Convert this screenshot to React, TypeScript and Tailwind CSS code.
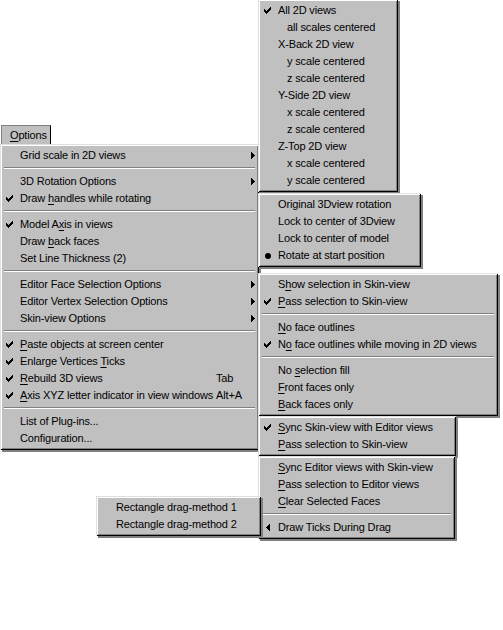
import React from 'react';

type Mark = 'check' | 'dot' | 'left';
type Item =
  | { t: string; u?: number; mark?: Mark; sub?: boolean; key?: string; ind?: boolean }
  | 'sep';

// classic 7x7 menu check bitmap
const CHECK = ['......#', '.....##', '#...###', '##.###.', '#####..', '.###...', '..#....'];

const Check = () => (
  <svg width="7" height="7" viewBox="0 0 7 7" shapeRendering="crispEdges">
    {CHECK.flatMap((row, y) =>
      row.split('').map((c, x) => (c === '#' ? <rect key={`${x}-${y}`} x={x} y={y} width="1" height="1" fill="#000" /> : null))
    )}
  </svg>
);

const ArrowRight = () => (
  <svg width="4" height="7" viewBox="0 0 4 7" shapeRendering="crispEdges">
    {[1, 2, 3, 4, 3, 2, 1].map((w, y) => (
      <rect key={y} x={0} y={y} width={w} height="1" fill="#000" />
    ))}
  </svg>
);

const ArrowLeft = () => (
  <svg width="4" height="7" viewBox="0 0 4 7" shapeRendering="crispEdges">
    {[1, 2, 3, 4, 3, 2, 1].map((w, y) => (
      <rect key={y} x={4 - w} y={y} width={w} height="1" fill="#000" />
    ))}
  </svg>
);

const Label = ({ t, u }: { t: string; u?: number }) =>
  u === undefined ? (
    <>{t}</>
  ) : (
    <>
      {t.slice(0, u)}
      <span className="underline decoration-1 underline-offset-[2px]">{t[u]}</span>
      {t.slice(u + 1)}
    </>
  );

const Menu = ({ items, className, keys }: { items: Item[]; className: string; keys?: boolean }) => (
  <div
    className={`absolute bg-[#c0c0c0] p-[3px] shadow-[inset_1px_1px_0_#dfdfdf,inset_-1px_-1px_0_#000,inset_2px_2px_0_#fff,inset_-2px_-2px_0_#808080,2px_2px_0_#808080] ${className}`}
  >
    {items.map((it, i) =>
      it === 'sep' ? (
        <div key={i} className="h-[9px] py-[3px] px-px">
          <div className="border-t border-b border-t-[#808080] border-b-white" />
        </div>
      ) : (
        <div key={i} className="flex h-[17px] items-center whitespace-nowrap">
          <div className="flex w-[17px] items-center pl-[3px]">
            {it.mark === 'check' && <Check />}
            {it.mark === 'dot' && <div className="ml-[1px] h-[6px] w-[6px] rounded-full bg-black" />}
            {it.mark === 'left' && <div className="ml-[2px] flex"><ArrowLeft /></div>}
          </div>
          <div className={`flex-1 ${it.ind ? 'pl-[9px]' : ''}`}>
            <Label t={it.t} u={it.u} />
          </div>
          {keys && <div className="w-[30px]">{it.key}</div>}
          {keys && (
            <div className="flex w-[10px] justify-end pr-px">{it.sub && <ArrowRight />}</div>
          )}
        </div>
      )
    )}
  </div>
);

const mainItems: Item[] = [
  { t: 'Grid scale in 2D views', sub: true },
  'sep',
  { t: '3D Rotation Options', sub: true },
  { t: 'Draw handles while rotating', u: 5, mark: 'check' },
  'sep',
  { t: 'Model Axis in views', u: 7, mark: 'check' },
  { t: 'Draw back faces', u: 5 },
  { t: 'Set Line Thickness (2)' },
  'sep',
  { t: 'Editor Face Selection Options', sub: true },
  { t: 'Editor Vertex Selection Options', sub: true },
  { t: 'Skin-view Options', sub: true },
  'sep',
  { t: 'Paste objects at screen center', u: 0, mark: 'check' },
  { t: 'Enlarge Vertices Ticks', u: 17, mark: 'check' },
  { t: 'Rebuild 3D views', u: 0, mark: 'check', key: 'Tab' },
  { t: 'Axis XYZ letter indicator in view windows', u: 0, mark: 'check', key: 'Alt+A' },
  'sep',
  { t: 'List of Plug-ins...' },
  { t: 'Configuration...' },
];

const gridItems: Item[] = [
  { t: 'All 2D views', mark: 'check' },
  { t: 'all scales centered', ind: true },
  { t: 'X-Back 2D view' },
  { t: 'y scale centered', ind: true },
  { t: 'z scale centered', ind: true },
  { t: 'Y-Side 2D view' },
  { t: 'x scale centered', ind: true },
  { t: 'z scale centered', ind: true },
  { t: 'Z-Top 2D view' },
  { t: 'x scale centered', ind: true },
  { t: 'y scale centered', ind: true },
];

const rotItems: Item[] = [
  { t: 'Original 3Dview rotation' },
  { t: 'Lock to center of 3Dview' },
  { t: 'Lock to center of model' },
  { t: 'Rotate at start position', mark: 'dot' },
];

const faceItems: Item[] = [
  { t: 'Show selection in Skin-view', u: 1 },
  { t: 'Pass selection to Skin-view', u: 0, mark: 'check' },
  'sep',
  { t: 'No face outlines', u: 0 },
  { t: 'No face outlines while moving in 2D views', u: 1, mark: 'check' },
  'sep',
  { t: 'No selection fill', u: 3 },
  { t: 'Front faces only', u: 0 },
  { t: 'Back faces only', u: 0 },
];

const vertexItems: Item[] = [
  { t: 'Sync Skin-view with Editor views', u: 0, mark: 'check' },
  { t: 'Pass selection to Skin-view', u: 0 },
];

const skinItems: Item[] = [
  { t: 'Sync Editor views with Skin-view', u: 0 },
  { t: 'Pass selection to Editor views', u: 0 },
  { t: 'Clear Selected Faces', u: 0 },
  'sep',
  { t: 'Draw Ticks During Drag', mark: 'left' },
];

const rectItems: Item[] = [{ t: 'Rectangle drag-method 1' }, { t: 'Rectangle drag-method 2' }];

export default function App() {
  return (
    <div className="relative h-[630px] w-[503px] overflow-hidden bg-white font-['Liberation_Sans',Arial,sans-serif] text-[11px] leading-none tracking-[-0.15px] text-black">
      {/* pressed menu bar button */}
      <div className="absolute left-px top-[125px] flex h-[19px] w-[50px] items-center border-t border-l border-r border-t-[#808080] border-l-[#808080] border-r-black bg-[#c0c0c0] pl-[8px]">
        <Label t="Options" u={0} />
      </div>

      <Menu items={mainItems} keys className="left-0 top-[144px] w-[259px]" />
      <Menu items={gridItems} className="left-[258px] top-[-1px] w-[140px]" />
      <Menu items={rotItems} className="left-[258px] top-[193px] w-[163px]" />
      <Menu items={faceItems} className="left-[258px] top-[273px] w-[240px]" />
      <Menu items={vertexItems} className="left-[258px] top-[416px] w-[198px]" />
      <Menu items={skinItems} className="left-[258px] top-[456px] w-[197px]" />
      <Menu items={rectItems} className="left-[96px] top-[496px] w-[165px]" />
    </div>
  );
}
